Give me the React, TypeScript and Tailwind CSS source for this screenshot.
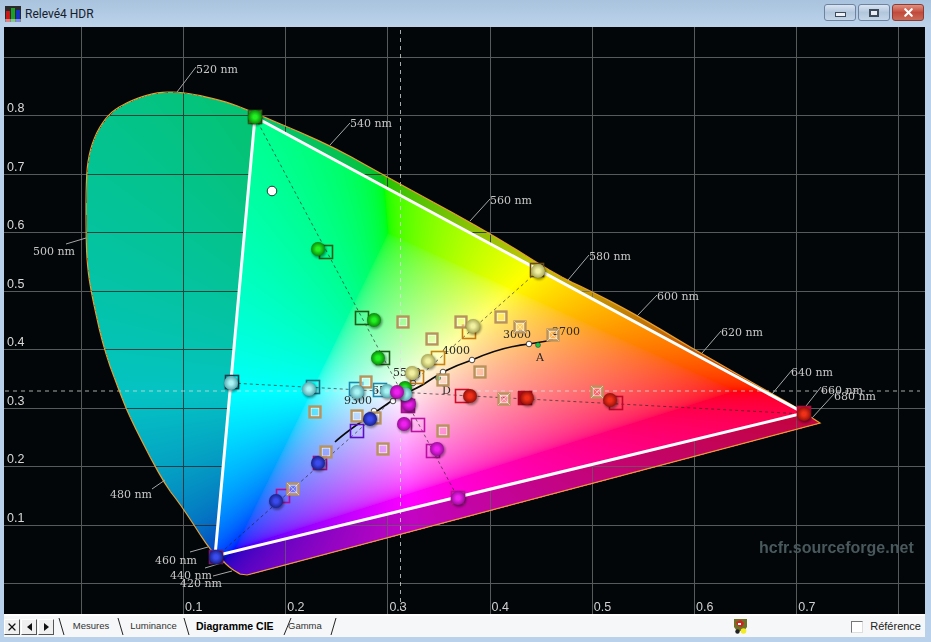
import React, { useEffect, useRef } from 'react';
import { X } from 'lucide-react';

// Outline of the diagram as it sits on the page, tips first
const OUTLINE: [number, number][] = [
  [797, 408], [695, 350], [640, 317], [593, 292], [560, 277], [490, 233], [387, 177], [330, 145], [250, 111], [230, 103],
  [203, 96], [180, 92], [160, 92], [140, 97], [120, 106], [107, 116], [95, 135], [88, 158], [86, 185], [86, 232],
  [87, 263], [91, 292], [104, 350], [120, 393], [130, 418], [163, 482], [183, 508], [210, 550], [220, 558], [230, 568], [240, 574],
];

const smooth = (pts: [number, number][]) => {
  const out: [number, number][] = [pts[0]];
  for (let i = 0; i < pts.length - 1; i++) {
    const [ax, ay] = pts[i];
    const [bx, by] = pts[i + 1];
    out.push([ax * 0.75 + bx * 0.25, ay * 0.75 + by * 0.25], [ax * 0.25 + bx * 0.75, ay * 0.25 + by * 0.75]);
  }
  out.push(pts[pts.length - 1]);
  return out;
};

const LOCUS_PX: [number, number][] = [[247, 575], [820, 423], ...smooth(smooth(OUTLINE))];
const TRIANGLE: [number, number][] = [[255, 117], [804, 413], [215, 556]];

const inside = (poly: [number, number][], x: number, y: number) => {
  let hit = false;
  for (let i = 0, j = poly.length - 1; i < poly.length; j = i++) {
    const [xi, yi] = poly[i];
    const [xj, yj] = poly[j];
    if (yi > y !== yj > y && x < ((xj - xi) * (y - yi)) / (yj - yi) + xi) hit = !hit;
  }
  return hit;
};

const CHART_W = 921;
const CHART_H = 587;
const GRID_X = [81, 183, 285, 387, 490, 592, 694, 796, 898];
const GRID_Y = [57, 115, 174, 232, 291, 349, 408, 466, 525, 583];

const GamutCanvas: React.FC = () => {
  const ref = useRef<HTMLCanvasElement>(null);

  useEffect(() => {
    const ctx = ref.current?.getContext('2d');
    if (!ctx) return;
    const img = ctx.createImageData(CHART_W, CHART_H);
    for (let j = 0; j < CHART_H; j++) {
      const Y = j + 27;
      for (let i = 0; i < CHART_W; i++) {
        const X = i + 4;
        const k = (j * CHART_W + i) * 4;
        const onGrid = GRID_X.includes(X) || GRID_Y.includes(Y);
        let c = [2, 6, 8];
        if (inside(LOCUS_PX, X, Y)) {
          const cx = (X - 81) / 1022;
          const cy = (583.5 - Y) / 585;
          const XX = cx / cy;
          const ZZ = (1 - cx - cy) / cy;
          // rec.709 values, out of gamut colours get white added
          const r = 3.2406 * XX - 1.5372 - 0.4986 * ZZ;
          const g = -0.9689 * XX + 1.8758 + 0.0415 * ZZ;
          const b = 0.0557 * XX - 0.204 + 1.057 * ZZ;
          const low = Math.min(r, g, b, 0);
          const m = Math.max(r, g, b) - low;
          const tri = inside(TRIANGLE, X, Y);
          c = [r, g, b].map(v => {
            const lit = Math.pow((v - low) / m, 1 / 2.2) * 255;
            return tri ? lit : lit * 0.75 + 4;
          });
          if (onGrid && !tri) {
            c = c[1] > c[0] ? c.map(v => v * 0.18 + 32) : c.map(v => v * 0.3 + 70);
          }
        } else if (onGrid) {
          c = [86, 90, 90];
        }
        img.data[k] = c[0];
        img.data[k + 1] = c[1];
        img.data[k + 2] = c[2];
        img.data[k + 3] = 255;
      }
    }
    ctx.putImageData(img, 0, 0);
  }, []);

  return <canvas ref={ref} width={CHART_W} height={CHART_H} className="block" />;
};

const BALLS: Record<string, [string, string]> = {
  green: ['#22f022', '#067a06'],
  cyan: ['#a8f4f4', '#4f9fa8'],
  blue: ['#3a4cf0', '#141c80'],
  magenta: ['#f020f0', '#900a90'],
  red: ['#f03018', '#8a0c08'],
  yellow: ['#f0f0a0', '#a0a050'],
};

const Ball = ({ x, y, c }: { x: number; y: number; c: string }) => (
  <g>
    <circle cx={x + 1} cy={y + 1.5} r={7.5} fill="#000" opacity={0.4} filter="url(#soft)" />
    <circle cx={x} cy={y} r={7} fill={`url(#ball-${c})`} />
  </g>
);

const Box = ({ x, y, c, fill = 'none' }: { x: number; y: number; c: string; fill?: string }) => (
  <rect x={x - 6.5} y={y - 6.5} width={13} height={13} fill={fill} stroke={c} strokeWidth={1.6} />
);

const TAN: [number, number, boolean?][] = [
  [403, 322], [461, 322], [501, 317], [520, 327, true], [432, 339], [553, 335, true], [480, 372], [443, 380], [366, 382],
  [315, 412], [357, 416], [375, 418], [443, 431], [383, 449], [326, 452], [293, 489, true], [504, 399, true], [597, 392, true],
];

const Tan = ({ x, y, cross }: { x: number; y: number; cross?: boolean }) => (
  <g fill="none">
    <rect x={x - 5.4} y={y - 5.4} width={10.8} height={10.8} stroke="#b8935c" strokeWidth={2.5} />
    <rect x={x - 3.8} y={y - 3.8} width={7.6} height={7.6} stroke="#fff" strokeWidth={0.7} opacity={0.85} />
    {cross && <path d={`M${x - 6} ${y - 6}L${x + 6} ${y + 6}M${x + 6} ${y - 6}L${x - 6} ${y + 6}`} stroke="#fff" strokeWidth={0.6} opacity={0.8} />}
  </g>
);

const BOXES: { x: number; y: number; c: string; fill?: string }[] = [
  { x: 255, y: 117, c: '#2f5a18', fill: '#48a038' },
  { x: 326, y: 252, c: '#2a5a14' },
  { x: 362, y: 318, c: '#1f5a14' },
  { x: 383, y: 358, c: '#1f5a14' },
  { x: 537, y: 270, c: '#6a4a18' },
  { x: 469, y: 332, c: '#c87810' },
  { x: 438, y: 358, c: '#c88410' },
  { x: 417, y: 377, c: '#c07810' },
  { x: 232, y: 382, c: '#24384a' },
  { x: 313, y: 387, c: '#1a6a80' },
  { x: 356, y: 389, c: '#1a88b0' },
  { x: 380, y: 390, c: '#1a88b0' },
  { x: 216, y: 557, c: '#701a70', fill: '#20208a' },
  { x: 283, y: 496, c: '#b01090' },
  { x: 320, y: 463, c: '#a01080' },
  { x: 357, y: 431, c: '#5a10c0' },
  { x: 458, y: 498, c: '#b01890', fill: '#d82ab0' },
  { x: 433, y: 451, c: '#b810a0' },
  { x: 418, y: 425, c: '#c010a8' },
  { x: 408, y: 406, c: '#a81090', fill: '#c020b8' },
  { x: 804, y: 413, c: '#b00c3a', fill: '#c01030' },
  { x: 616, y: 403, c: '#c0082a' },
  { x: 525, y: 398, c: '#a80820', fill: '#b00a1a' },
  { x: 462, y: 396, c: '#d00c28' },
];

const DOTS: { x: number; y: number; c: string }[] = [
  { x: 255, y: 117, c: 'green' }, { x: 318, y: 249, c: 'green' }, { x: 374, y: 320, c: 'green' }, { x: 378, y: 358, c: 'green' },
  { x: 538, y: 271, c: 'yellow' }, { x: 473, y: 326, c: 'yellow' }, { x: 428, y: 361, c: 'yellow' }, { x: 412, y: 373, c: 'yellow' },
  { x: 231, y: 383, c: 'cyan' }, { x: 309, y: 389, c: 'cyan' }, { x: 357, y: 392, c: 'cyan' }, { x: 387, y: 391, c: 'cyan' },
  { x: 216, y: 557, c: 'blue' }, { x: 276, y: 501, c: 'blue' }, { x: 318, y: 463, c: 'blue' }, { x: 370, y: 419, c: 'blue' },
  { x: 458, y: 498, c: 'magenta' }, { x: 437, y: 449, c: 'magenta' }, { x: 404, y: 424, c: 'magenta' }, { x: 409, y: 404, c: 'magenta' },
  { x: 804, y: 414, c: 'red' }, { x: 610, y: 400, c: 'red' }, { x: 527, y: 398, c: 'red' }, { x: 470, y: 396, c: 'red' },
  { x: 405, y: 388, c: 'green' }, { x: 405, y: 394, c: 'cyan' }, { x: 397, y: 392, c: 'magenta' },
];

const WAVELENGTHS: { t: string; x: number; y: number; l: [number, number, number, number] }[] = [
  { t: '520 nm', x: 196, y: 73, l: [177, 92, 196, 67] },
  { t: '540 nm', x: 350, y: 127, l: [330, 145, 350, 123] },
  { t: '560 nm', x: 490, y: 204, l: [470, 221, 490, 199] },
  { t: '580 nm', x: 589, y: 260, l: [568, 280, 589, 255] },
  { t: '600 nm', x: 657, y: 300, l: [637, 316, 657, 295] },
  { t: '620 nm', x: 721, y: 336, l: [702, 353, 721, 331] },
  { t: '640 nm', x: 791, y: 376, l: [772, 394, 792, 370] },
  { t: '660 nm', x: 821, y: 394, l: [806, 406, 821, 387] },
  { t: '680 nm', x: 834, y: 400, l: [812, 418, 834, 394] },
  { t: '500 nm', x: 33, y: 255, l: [86, 238, 66, 244] },
  { t: '480 nm', x: 110, y: 498, l: [165, 480, 152, 489] },
  { t: '460 nm', x: 155, y: 564, l: [208, 547, 190, 552] },
  { t: '440 nm', x: 170, y: 579, l: [225, 562, 205, 568] },
  { t: '420 nm', x: 180, y: 587, l: [232, 571, 213, 576] },
];

const Y_LABELS = ['0.8', '0.7', '0.6', '0.5', '0.4', '0.3', '0.2', '0.1'];
const X_LABELS = ['0.1', '0.2', '0.3', '0.4', '0.5', '0.6', '0.7'];

const CCT = [
  { t: '3000', x: 503, y: 338 },
  { t: '2700', x: 552, y: 335 },
  { t: '4000', x: 442, y: 354 },
  { t: '5500', x: 393, y: 376 },
  { t: '6500', x: 372, y: 394 },
  { t: '9300', x: 344, y: 404 },
];

const Overlay = () => (
  <svg viewBox="4 27 921 587" className="absolute inset-0 w-full h-full">
    <defs>
      {Object.entries(BALLS).map(([name, [hi, lo]]) => (
        <radialGradient key={name} id={`ball-${name}`} cx="0.5" cy="0.5" r="0.55">
          <stop offset="0.25" stopColor={hi} />
          <stop offset="1" stopColor={lo} />
        </radialGradient>
      ))}
      <filter id="soft" x="-30%" y="-30%" width="160%" height="160%">
        <feGaussianBlur stdDeviation="1.2" />
      </filter>
    </defs>

    {/* white point cross */}
    <path d="M400.5 30V612M5 391H920" stroke="#e0e0e0" strokeWidth={1} strokeDasharray="4 4" opacity={0.75} fill="none" />

    {/* locus outline and labels */}
    <polygon points={LOCUS_PX.map(p => p.join(',')).join(' ')} fill="none" stroke="#e8a030" strokeWidth={1.2} />
    {WAVELENGTHS.map(w => (
      <g key={w.t}>
        <line x1={w.l[0]} y1={w.l[1]} x2={w.l[2]} y2={w.l[3]} stroke="#a8a8a8" strokeWidth={1} />
        <text x={w.x} y={w.y} fill="#c8c8c8" fontSize={11} fontFamily="'DejaVu Serif', serif">{w.t}</text>
      </g>
    ))}

    {/* axes */}
    {Y_LABELS.map((t, i) => (
      <text key={t} x={7} y={112 + i * 58.5} fill="#d8d8d8" fontSize={12.5} fontFamily="'Liberation Sans', sans-serif">{t}</text>
    ))}
    {X_LABELS.map((t, i) => (
      <text key={t} x={185 + i * 102.2} y={611} fill="#d0d0d0" fontSize={12.5} fontFamily="'Liberation Sans', sans-serif">{t}</text>
    ))}

    {/* dashed primaries through white */}
    <path d="M255 117L458 498M804 414L231 383M216 557L538 271" stroke="#222" strokeWidth={0.8} strokeDasharray="3 3" fill="none" opacity={0.8} />

    {/* gamut triangle */}
    <polygon points={TRIANGLE.map(p => p.join(',')).join(' ')} fill="none" stroke="#fff" strokeWidth={3} />

    {/* planckian locus */}
    <path d="M335 442C350 428 372 415 390 402C405 392 416 390 427 382C436 376 442 373 443 372C455 366 463 363 472 360C490 352 510 346 529 344L553 340" fill="none" stroke="#0a0a0a" strokeWidth={1.6} />
    {[[393, 401], [413, 383], [443, 372], [472, 360], [529, 344], [374, 411]].map(([x, y]) => (
      <circle key={x} cx={x} cy={y} r={2.8} fill="#fff" stroke="#222" strokeWidth={0.8} />
    ))}
    <circle cx={538} cy={345} r={2.5} fill="#18c838" stroke="#116" strokeWidth={0.4} />
    <circle cx={438} cy={378} r={2.5} fill="#18c838" stroke="#116" strokeWidth={0.4} />
    {CCT.map(c => (
      <text key={c.t} x={c.x} y={c.y} fill="#2a2a2a" fontSize={11} fontFamily="'DejaVu Serif', serif">{c.t}</text>
    ))}
    <text x={536} y={361} fill="#2a2a2a" fontSize={11} fontFamily="'DejaVu Serif', serif">A</text>
    <text x={442} y={394} fill="#2a2a2a" fontSize={11} fontFamily="'DejaVu Serif', serif">D</text>

    {BOXES.map(b => <Box key={`${b.x}-${b.y}`} {...b} />)}
    {TAN.map(([x, y, cross]) => <Tan key={`${x}-${y}`} x={x} y={y} cross={cross} />)}
    {DOTS.map(d => <Ball key={`${d.x}-${d.y}`} {...d} />)}
    <circle cx={272} cy={191} r={4.8} fill="#fff" stroke="#1a3a2a" strokeWidth={1} />

    <text x={759} y={553} fill="#48585c" fontSize={16} fontWeight={700} fontFamily="'Liberation Sans', sans-serif">hcfr.sourceforge.net</text>
  </svg>
);

const AppIcon = () => (
  <svg width="16" height="16" viewBox="0 0 16 16" className="shrink-0">
    <rect width="16" height="16" fill="#2a2a2a" />
    <rect x="1" y="5" width="4" height="11" fill="#c81818" />
    <rect x="6" y="2" width="4" height="14" fill="#18a028" />
    <rect x="11" y="4" width="4" height="12" fill="#1830c0" />
    <rect x="0" y="13" width="16" height="3" fill="#fff" opacity={0.45} />
  </svg>
);

const Slant = ({ flip = false, w = 7 }: { flip?: boolean; w?: number }) => (
  <svg width={w} height="17" viewBox={`0 0 ${w} 17`} className="shrink-0">
    <line x1={flip ? w - 1 : 1} y1="0" x2={flip ? 1 : w - 1} y2="17" stroke="#222" strokeWidth="1" />
  </svg>
);

const NavButton = ({ children }: { children: React.ReactNode }) => (
  <div className="w-[16px] h-[16px] flex items-center justify-center bg-[#f0f0f0] border border-t-white border-l-white border-r-[#555] border-b-[#555] text-[#111]">
    {children}
  </div>
);

const PaletteIcon = () => (
  <svg width="15" height="15" viewBox="0 0 15 15">
    <path d="M1 0H14V8L11 12H4L1 8Z" fill="#6f7228" />
    <path d="M3 3L8 1L11 4L9 8L5 7Z" fill="#d82020" />
    <path d="M5 4H8V6H5Z" fill="#fff" />
    <circle cx="4.5" cy="12.5" r="2.2" fill="#222" />
    <circle cx="10.5" cy="12" r="2.8" fill="#f2ec20" />
  </svg>
);

export default function App() {
  return (
    <div className="w-[931px] h-[642px] flex flex-col overflow-hidden bg-[#b9d1ea] font-['Liberation_Sans',sans-serif]">
      {/* Title bar */}
      <div className="h-[27px] shrink-0 flex items-center pl-[5px] bg-gradient-to-b from-[#a9c3de] to-[#bcd3ea]">
        <AppIcon />
        <span className="ml-[4px] text-[12px] text-[#16202c] font-['Roboto',sans-serif]">Relevé4 HDR</span>
        <div className="ml-auto mr-[7px] flex gap-[2px] -mt-[2px]">
          <div className="w-[32px] h-[17px] rounded-[3px] border border-[#6d83a0] bg-gradient-to-b from-[#d9e5f2] via-[#b2c6dc] to-[#c4d6e8] flex items-end justify-center pb-[3px]">
            <div className="w-[11px] h-[5px] border border-[#3d4a5c] bg-[#eef2f6]" />
          </div>
          <div className="w-[32px] h-[17px] rounded-[3px] border border-[#6d83a0] bg-gradient-to-b from-[#d9e5f2] via-[#b2c6dc] to-[#c4d6e8] flex items-center justify-center">
            <div className="w-[10px] h-[8px] border-2 border-[#3d4a5c] bg-[#e8eef4]" />
          </div>
          <div className="w-[32px] h-[17px] rounded-[3px] border border-[#8a3c34] bg-gradient-to-b from-[#e09080] via-[#c24a3c] to-[#c86a58] flex items-center justify-center">
            <X className="w-[13px] h-[13px] text-white [stroke-width:4]" />
          </div>
        </div>
      </div>

      {/* Chart */}
      <div className="relative ml-[4px] w-[921px] h-[587px] shrink-0 bg-[#020608]">
        <GamutCanvas />
        <Overlay />
      </div>

      {/* Tab strip */}
      <div className="ml-[4px] mr-[6px] h-[23px] shrink-0 flex items-center bg-[#f6f7f8] border-t-2 border-white text-[9.5px] text-[#333]">
        <div className="flex gap-[1px]">
          <NavButton><X className="w-[12px] h-[12px] [stroke-width:2.5]" /></NavButton>
          <NavButton><span className="w-0 h-0 border-y-[4px] border-y-transparent border-r-[5px] border-r-[#111]" /></NavButton>
          <NavButton><span className="w-0 h-0 border-y-[4px] border-y-transparent border-l-[5px] border-l-[#111]" /></NavButton>
        </div>
        <div className="ml-[4px] flex items-center">
          <Slant />
          <span className="w-[52px] text-center">Mesures</span>
          <Slant />
          <span className="w-[59px] text-center">Luminance</span>
          <Slant />
          <span className="w-[93px] pl-[6px] text-[10.5px] font-bold text-black">Diagramme CIE</span>
          <Slant flip w={9} />
          <span className="w-[42px] -ml-[4px]">Gamma</span>
          <Slant flip />
        </div>
        <div className="ml-[396px] flex items-center">
          <PaletteIcon />
        </div>
        <div className="ml-auto mr-[4px] flex items-center gap-[7px] text-[11px] text-[#222]">
          <div className="w-[12px] h-[12px] bg-white border border-t-[#777] border-l-[#777] border-r-[#ddd] border-b-[#ddd]" />
          <span>Référence</span>
        </div>
      </div>
    </div>
  );
}
